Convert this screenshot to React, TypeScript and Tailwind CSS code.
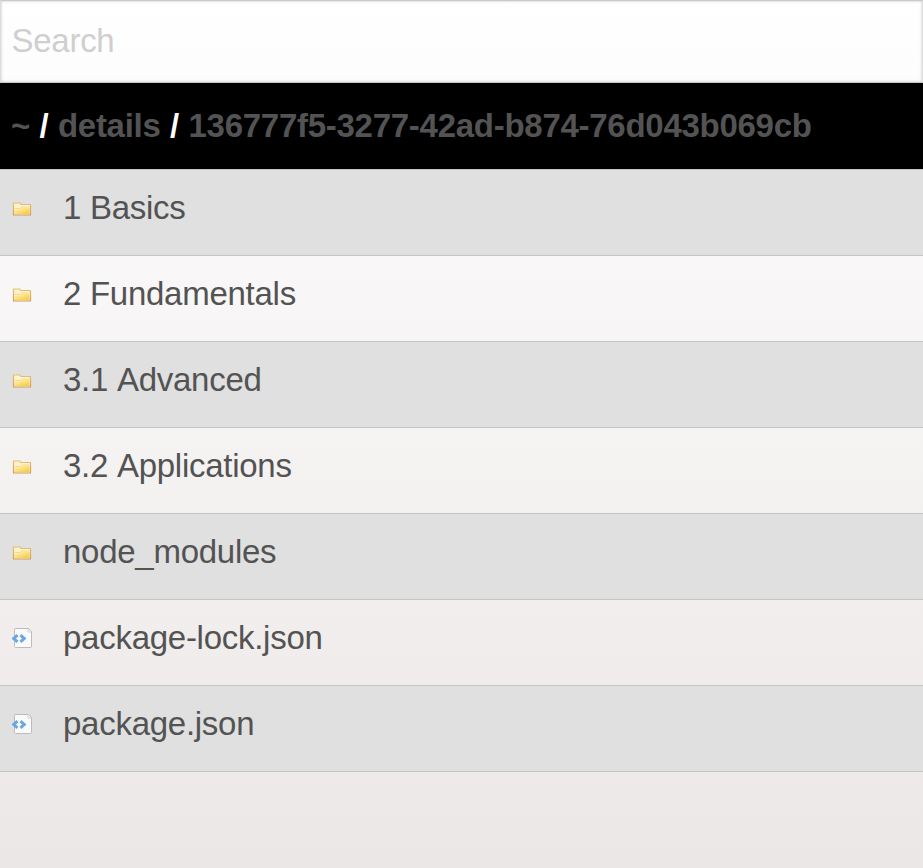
const rows = [
  { name: "1 Basics", folder: true },
  { name: "2 Fundamentals", folder: true },
  { name: "3.1 Advanced", folder: true },
  { name: "3.2 Applications", folder: true },
  { name: "node_modules", folder: true },
  { name: "package-lock.json", folder: false },
  { name: "package.json", folder: false },
];

function FolderIcon() {
  return (
    <svg width="20" height="20" viewBox="0 0 20 20" className="relative top-px">
      <defs>
        <linearGradient id="folder" x1="0" y1="0" x2="0.8" y2="1">
          <stop offset="0" stopColor="#fff3b8" />
          <stop offset="0.5" stopColor="#fbe07a" />
          <stop offset="1" stopColor="#f6cb45" />
        </linearGradient>
        <linearGradient id="edge" x1="0" y1="0" x2="0" y2="1">
          <stop offset="0" stopColor="#e6bf72" />
          <stop offset="1" stopColor="#d09a60" />
        </linearGradient>
      </defs>
      <path d="M1.500 16V4H8l1 1.500h9.500V16z" fill="#fdf3c9" stroke="url(#edge)" strokeWidth="1.200" strokeLinejoin="round" />
      <path d="M2.500 15V10.500h6L10 9h7.500v6z" fill="url(#folder)" />
      <path d="M3 9.500h5.500L10 8h7.500" fill="none" stroke="#f1d184" strokeWidth="0.800" />
    </svg>
  );
}

function CodeIcon() {
  return (
    <svg width="20" height="20" viewBox="0 0 20 20">
      <path d="M3 .5h13.500l3 3v15q0 1-1 1H3.500q-1 0-1-1V1z" fill="#fafafa" stroke="#bcbcbc" />
      <path d="M16 1v3h3" fill="none" stroke="#d2d2d2" />
      <path d="M5.500 7.200L1.800 10.500l3.700 3.300M8.500 7.200l3.700 3.300-3.700 3.300" fill="none" stroke="#69a7e3" strokeWidth="3" />
    </svg>
  );
}

export default function App() {
  return (
    <div className="h-[868px] overflow-hidden bg-linear-to-b from-white to-[#ebe7e6] font-['Liberation_Sans',Arial,sans-serif] text-[33px] tracking-[-0.27px] text-[#535353] [font-kerning:none]">
      <input
        placeholder="Search"
        className="block h-[83px] w-full border border-[#c9c9c9] border-l-[#dddddd] border-r-[#dddddd] bg-transparent px-[10.5px] pb-[2px] tracking-[-0.27px] shadow-[inset_0_0_3px_#c4c4c4] outline-none placeholder:text-[#cfcfcf]"
      />
      <h1 className="flex h-[86px] items-center gap-[9.500px] bg-black px-[11px] font-bold">
        <span>~</span>
        <span className="text-white">/</span>
        <span>details</span>
        <span className="text-white">/</span>
        <span>136777f5-3277-42ad-b874-76d043b069cb</span>
      </h1>
      <ul className="border-t border-[#c8c8c8]">
        {rows.map((row) => (
          <li key={row.name} className="flex h-[86px] items-center border-b border-[#c5c5c5] px-3 pb-[9px] odd:bg-[#e0e0e0]">
            {row.folder ? <FolderIcon /> : <CodeIcon />}
            <span className="ml-[31px]">{row.name}</span>
          </li>
        ))}
      </ul>
    </div>
  );
}
